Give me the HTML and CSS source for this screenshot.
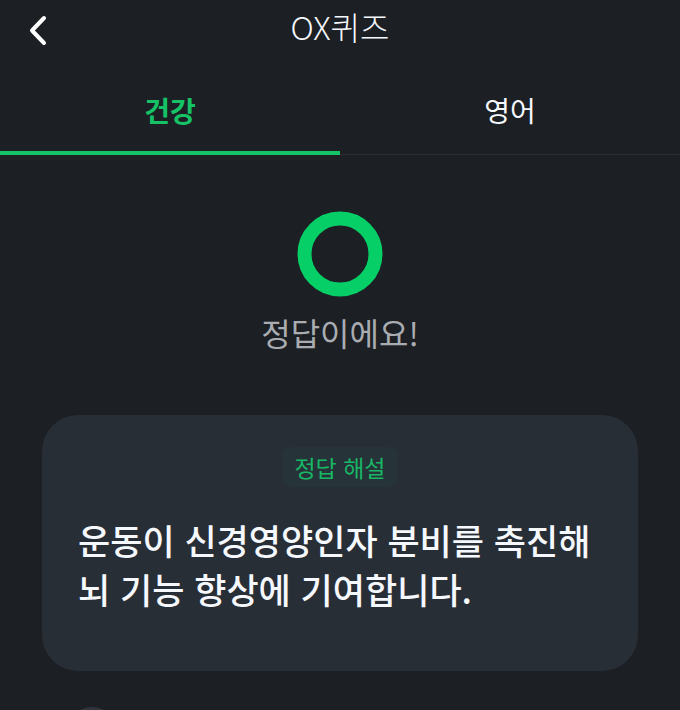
FILE: index.html
```html
<!DOCTYPE html>
<html lang="ko">
<head>
<meta charset="utf-8">
<meta name="viewport" content="width=device-width, initial-scale=1">
<title>OX퀴즈</title>
<link rel="stylesheet" href="styles.css">
</head>
<body>
<div class="app">
  <header class="header">
    <button class="back" type="button" aria-label="뒤로">
      <svg class="back-icon" viewBox="0 0 20 32" aria-hidden="true"><path d="M16 4 4 16.500 16 29"/></svg>
    </button>
    <h1 class="title">OX퀴즈</h1>
  </header>
  <nav class="tabs">
    <a class="tab tab-active" href="#health" aria-current="page">건강</a>
    <a class="tab" href="#english">영어</a>
  </nav>
  <main class="content">
    <section class="result">
      <svg class="result-icon" viewBox="0 0 86 86" aria-hidden="true"><circle cx="43" cy="43" r="35.500"/></svg>
      <p class="result-text">정답이에요!</p>
    </section>
    <section class="card">
      <h2 class="badge">정답 해설</h2>
      <p class="explanation">운동이 신경영양인자 분비를 촉진해 뇌 기능 향상에 기여합니다.</p>
    </section>
    <div class="next"></div>
  </main>
</div>
</body>
</html>
```

FILE: styles.css
```css
* {
  box-sizing: border-box;
}

body {
  margin: 0;
  background: #1c1f24;
  color: #f5f8fc;
  font-family: "Noto Sans CJK KR", sans-serif;
}

h1, h2, p {
  margin: 0;
}

.app {
  height: 100vh;
  overflow: hidden;
}

.header {
  display: grid;
  grid-template-columns: 76px 1fr 76px;
  align-items: center;
  height: 60px;
}

.back {
  display: flex;
  justify-content: center;
  padding: 0;
  border: 0;
  background: none;
}

.back-icon {
  width: 20px;
  height: 32px;
  fill: none;
  stroke: #fff;
  stroke-width: 4;
  stroke-linecap: round;
  stroke-linejoin: round;
}

.title {
  text-align: center;
  font-size: 32px;
  font-weight: 300;
  line-height: 52px;
  padding-bottom: 8px;
}

.tabs {
  display: flex;
  height: 95px;
}

.tab {
  flex: 1;
  padding: 28px 0;
  border-bottom: 1px solid #2a2e33;
  color: inherit;
  font-size: 28px;
  font-weight: 400;
  line-height: 44px;
  text-align: center;
  text-decoration: none;
}

.tab-active {
  padding-bottom: 23px;
  border-bottom: 4px solid #15c265;
  color: #15c265;
  font-weight: 700;
}

.content {
  padding: 56px 42px 0;
}

.result {
  display: flex;
  flex-direction: column;
  align-items: center;
  gap: 12px;
}

.result-icon {
  width: 86px;
  height: 86px;
  fill: none;
  stroke: #05cf66;
  stroke-width: 14;
}

.result-text {
  color: #a9adb2;
  font-size: 32px;
  line-height: 46px;
}

.card {
  display: flex;
  flex-direction: column;
  align-items: center;
  gap: 28px;
  margin-top: 60px;
  padding: 32px 36px 58px;
  border-radius: 36px;
  background: #282e36;
}

.badge {
  padding: 0 12px;
  border-radius: 8px;
  background: #263338;
  color: #18b765;
  font-size: 23px;
  font-weight: 400;
  line-height: 40px;
}

.explanation {
  align-self: stretch;
  font-size: 35px;
  font-weight: 500;
  line-height: 49px;
}

.next {
  width: 48px;
  height: 48px;
  margin: 36px 26px 0;
  border-radius: 50%;
  background: #30343d;
}
```
